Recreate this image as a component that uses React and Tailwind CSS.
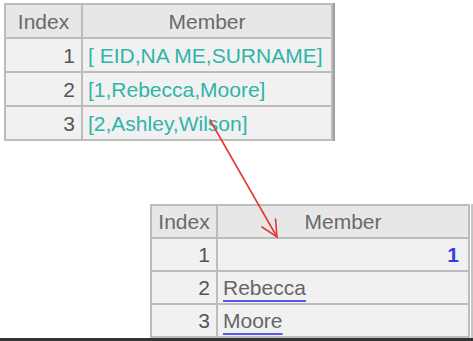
import React from 'react';

const topRows = [
  { i: 1, v: '[ EID,NA ME,SURNAME]' },
  { i: 2, v: '[1,Rebecca,Moore]' },
  { i: 3, v: '[2,Ashley,Wilson]' },
];

function HeaderCells() {
  return (
    <>
      <div className="bg-[#e7e7e7] text-[#6a6a6a] flex items-center justify-center">Index</div>
      <div className="bg-[#e7e7e7] text-[#6a6a6a] flex items-center justify-center">Member</div>
    </>
  );
}

export default function App() {
  return (
    <div className="relative w-[473px] h-[341px] bg-white overflow-hidden flex flex-col font-['Liberation_Sans',Arial,sans-serif] text-[21px] leading-none">
      {/* source sequence */}
      <div className="ml-[4px] mt-[3px] w-[331px] flex">
        <div className="grid grid-cols-[75px_248px] grid-rows-[32px_32px_32px_32px] gap-[2px] p-[2px] bg-[#bcbcbc]">
          <HeaderCells />
          {topRows.map((r) => (
            <React.Fragment key={r.i}>
              <div className="bg-[#f1f1f1] text-[#555] flex items-center justify-end pr-[6px]">{r.i}</div>
              <div className="bg-[#f1f1f1] text-[#2fb4aa] flex items-center pl-[5px] whitespace-nowrap">{r.v}</div>
            </React.Fragment>
          ))}
        </div>
        <div className="w-[2px] bg-[#9e9e9e]" />
      </div>

      {/* result sequence */}
      <div className="ml-[150px] mt-[63px] flex">
        <div className="grid grid-cols-[64px_250px] grid-rows-[31px_31px_31px_31px] gap-[2px] p-[2px] bg-[#bcbcbc]">
          <HeaderCells />
          <div className="bg-[#f1f1f1] text-[#555] flex items-center justify-end pr-[6px]">1</div>
          <div className="bg-[#f1f1f1] text-[#3b3be0] font-bold flex items-center justify-end pr-[9px]">1</div>
          <div className="bg-[#f1f1f1] text-[#555] flex items-center justify-end pr-[6px]">2</div>
          <div className="bg-[#f1f1f1] text-[#666] flex items-center pl-[5px]">
            <span className="underline decoration-[#5757ee] decoration-2 underline-offset-[5px]">Rebecca</span>
          </div>
          <div className="bg-[#f1f1f1] text-[#555] flex items-center justify-end pr-[6px]">3</div>
          <div className="bg-[#f1f1f1] text-[#666] flex items-center pl-[5px]">
            <span className="underline decoration-[#5757ee] decoration-2 underline-offset-[5px]">Moore</span>
          </div>
        </div>
        <div className="ml-[1px] w-[2px] bg-[#c4c4c4]" />
      </div>

      <div className="mt-auto h-[3px] bg-[#333]" />

      {/* arrow */}
      <svg className="absolute inset-0 pointer-events-none" width="473" height="341" viewBox="0 0 473 341">
        <g stroke="#e53935" strokeWidth="1.6" fill="none" strokeLinecap="round">
          <line x1="210" y1="120" x2="277" y2="237" />
          <polyline points="262,227 277,237 275.5,219" />
        </g>
      </svg>
    </div>
  );
}
